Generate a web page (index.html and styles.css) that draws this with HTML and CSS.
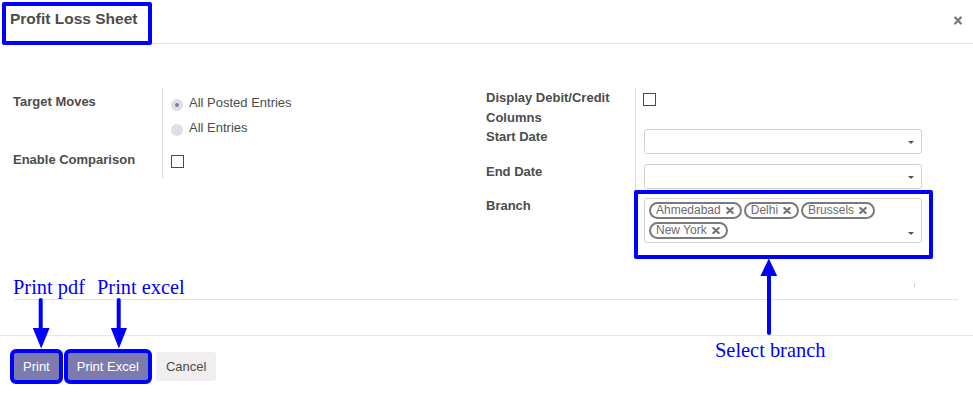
FILE: index.html
```html
<!DOCTYPE html>
<html lang="en">
<head>
<meta charset="utf-8">
<title>Profit Loss Sheet</title>
<link rel="stylesheet" href="styles.css">
</head>
<body>
<div class="dialog">
  <header class="dlg-header">
    <h4 class="dlg-title">Profit Loss Sheet</h4>
    <button class="close" aria-label="Close">
      <svg width="8" height="9" viewBox="0 0 8 9"><path d="M1.2 1.5L6.8 7.5M6.8 1.5L1.2 7.5" stroke="currentColor" stroke-width="2.3" stroke-linecap="round"/></svg>
    </button>
  </header>

  <main class="dlg-body">
    <div class="groups">
      <div class="group group-left">
        <div class="label">Target Moves</div>
        <div class="field field-moves">
          <div class="radio checked"><span class="dot"></span><span class="txt">All Posted Entries</span></div>
          <div class="radio"><span class="dot"></span><span class="txt">All Entries</span></div>
        </div>
        <div class="label label-compare">Enable Comparison</div>
        <div class="field"><span class="checkbox cb-compare"></span></div>
      </div>

      <div class="group group-right">
        <div class="label">Display Debit/Credit Columns</div>
        <div class="field"><span class="checkbox cb-debit"></span></div>
        <div class="label">Start Date</div>
        <div class="field"><div class="input"><span class="caret"></span></div></div>
        <div class="label">End Date</div>
        <div class="field"><div class="input"><span class="caret"></span></div></div>
        <div class="label">Branch</div>
        <div class="field">
          <div class="input input-tags">
            <div class="tags">
              <span class="tag">Ahmedabad<svg width="8" height="7" viewBox="0 0 8 7"><path d="M1.3 1L6.7 6M6.7 1L1.3 6" stroke="currentColor" stroke-width="2.1" stroke-linecap="round"/></svg></span>
              <span class="tag">Delhi<svg width="8" height="7" viewBox="0 0 8 7"><path d="M1.3 1L6.7 6M6.7 1L1.3 6" stroke="currentColor" stroke-width="2.1" stroke-linecap="round"/></svg></span>
              <span class="tag">Brussels<svg width="8" height="7" viewBox="0 0 8 7"><path d="M1.3 1L6.7 6M6.7 1L1.3 6" stroke="currentColor" stroke-width="2.1" stroke-linecap="round"/></svg></span>
              <span class="tag">New York<svg width="8" height="7" viewBox="0 0 8 7"><path d="M1.3 1L6.7 6M6.7 1L1.3 6" stroke="currentColor" stroke-width="2.1" stroke-linecap="round"/></svg></span>
            </div>
            <span class="caret caret-bottom"></span>
          </div>
        </div>
      </div>
    </div>
    <div class="tail">
      <span class="tick"></span>
      <div class="sep"></div>
    </div>
  </main>

  <footer class="dlg-footer">
    <button class="btn btn-primary marked">Print</button>
    <button class="btn btn-primary marked">Print Excel</button>
    <button class="btn btn-secondary">Cancel</button>
  </footer>
</div>

<div class="branch-box"></div>
<div class="note note-pdf">Print pdf</div>
<div class="note note-excel">Print excel</div>
<div class="note note-branch">Select branch</div>
<svg class="arrows" width="973" height="400" viewBox="0 0 973 400">
  <g fill="#0000ff" stroke="#0000ff" stroke-width="4" stroke-linecap="round">
    <line x1="40.7" y1="300" x2="40.7" y2="330"/>
    <line x1="118.7" y1="300" x2="118.7" y2="330"/>
    <line x1="769" y1="272" x2="769" y2="333"/>
  </g>
  <g fill="#0000ff">
    <polygon points="32.8,328 49.6,328 41.2,348.5"/>
    <polygon points="110.8,328 127,328 118.9,348.5"/>
    <polygon points="760.4,276 777.2,276 768.8,258.5"/>
  </g>
</svg>
</body>
</html>
```

FILE: styles.css
```css
* { box-sizing: border-box; }
html, body { margin: 0; padding: 0; }
body {
  width: 973px;
  height: 400px;
  position: relative;
  overflow: hidden;
  background: #fff;
  font-family: "Liberation Sans", Arial, sans-serif;
  font-size: 13px;
  color: #4c4c4c;
}

/* header */
.dlg-header {
  display: flex;
  justify-content: space-between;
  align-items: flex-start;
  height: 44px;
  border-bottom: 1px solid #e5e5e5;
}
.dlg-title {
  position: relative;
  margin: 2px 0 0 2px;
  width: 150px;
  height: 43px;
  padding: 4px 0 0 4px;
  border: 4px solid #0000ff;
  border-radius: 2px;
  background: #fff;
  font-size: 15.5px;
  line-height: 18px;
  font-weight: bold;
  color: #4c4c4c;
  white-space: nowrap;
}
.close {
  margin: 16px 11px 0 0;
  padding: 0;
  border: 0;
  background: none;
  color: #7a7a7a;
  line-height: 0;
}

/* body */
.dlg-body { height: 291px; padding-top: 44px; }
.groups {
  display: flex;
  align-items: flex-start;
  gap: 13px;
  padding-left: 13px;
}
.group {
  display: grid;
  grid-template-columns: 150px 1fr;
}
.group-left { width: 460px; grid-template-rows: 57px 33px; }
.group-right { width: 436px; grid-template-rows: 39px 35px 34px 49px; }

.label {
  border-right: 1px solid #dcdcdc;
  font-weight: bold;
  line-height: 20px;
  color: #4c4c4c;
}
.group-left .label { padding-top: 4px; }
.group-left .label-compare { padding-top: 5px; }
.field { padding-left: 8px; }
.field-moves { padding-top: 2px; }

.radio { display: flex; align-items: flex-start; height: 25px; }
.radio .dot {
  position: relative;
  width: 12px;
  height: 12px;
  margin: 9px 6px 0 0;
  border-radius: 50%;
  background: #dcdfe5;
}
.radio.checked .dot::after {
  content: "";
  position: absolute;
  left: 4px;
  top: 4px;
  width: 4px;
  height: 4px;
  border-radius: 50%;
  background: #7c7bad;
}
.radio .txt { margin-top: 3px; line-height: 20px; }

.checkbox {
  display: block;
  width: 13px;
  height: 13px;
  border: 1px solid #4a4a4a;
  background: #fff;
}
.cb-compare { margin-top: 10px; }
.cb-debit { margin-top: 5px; margin-left: -1px; }

.input {
  position: relative;
  width: 278px;
  height: 25px;
  margin-top: 2px;
  border: 1px solid #d2d2d2;
  border-radius: 3px;
}
.caret {
  position: absolute;
  right: 7px;
  top: 50%;
  margin-top: -1px;
  width: 0;
  height: 0;
  border-left: 3px solid transparent;
  border-right: 3px solid transparent;
  border-top: 3px solid #555;
}
.caret-bottom { top: auto; bottom: 7px; margin-top: 0; }

.input-tags { height: 45px; padding: 3px 4px; }
.tags { display: flex; flex-wrap: wrap; gap: 3px 2px; }
.tag {
  display: inline-flex;
  align-items: center;
  height: 17px;
  padding: 0 6px 0 5px;
  border: 2px solid #7a7a7a;
  border-radius: 9px;
  font-size: 12px;
  line-height: 13px;
  color: #6c6c6c;
}
.tag svg { margin-left: 5px; color: #707070; }

.tail { margin: 38px 15px 0 14px; }
.tick { display: block; width: 1px; height: 4px; margin-left: 900px; background: #cfcfcf; }
.sep { margin-top: 12px; border-top: 1px solid #e2e2e2; }

/* footer */
.dlg-footer {
  display: flex;
  gap: 7px;
  padding: 16px 13px;
  border-top: 1px solid #e5e5e5;
}
.btn {
  height: 29px;
  padding: 0 10px;
  border: 0;
  border-radius: 3px;
  font-family: "Liberation Sans", Arial, sans-serif;
  font-size: 13px;
}
.btn-primary { background: #7c7bad; color: #fff; }
.btn-secondary { background: #f0eeee; color: #4c4c4c; }
.marked { outline: 4px solid #0000ff; outline-offset: -1px; }

/* annotations */
.branch-box {
  position: absolute;
  left: 634px;
  top: 190px;
  width: 299px;
  height: 69px;
  border: 4px solid #0000ff;
  border-radius: 2px;
}
.note {
  position: absolute;
  font-family: "Liberation Serif", "Times New Roman", serif;
  font-size: 20.4px;
  line-height: 20px;
  color: #0000ff;
  white-space: nowrap;
}
.note-pdf { left: 13px; top: 277px; }
.note-excel { left: 97px; top: 277px; }
.note-branch { left: 715px; top: 340px; }
.arrows { position: absolute; left: 0; top: 0; pointer-events: none; }
```
